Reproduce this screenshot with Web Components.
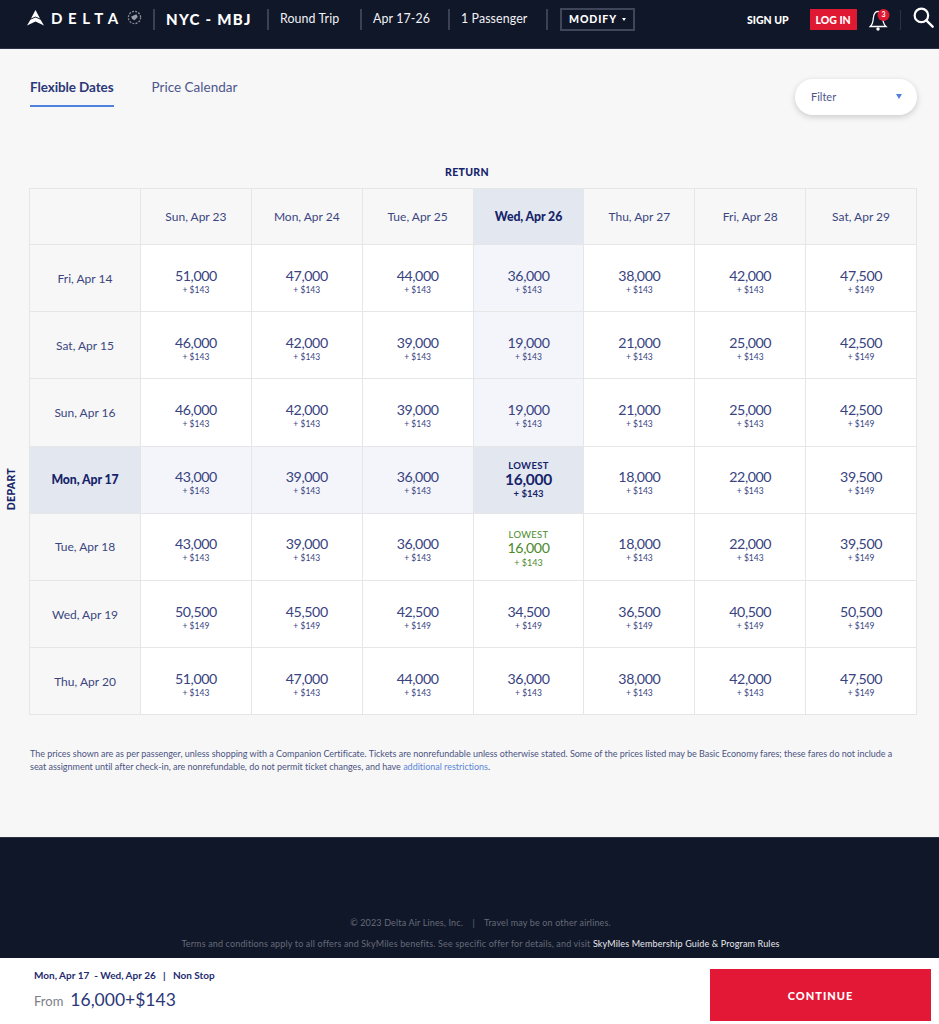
<!DOCTYPE html>
<html lang="en">
<head>
<meta charset="utf-8">
<title>Flexible Dates</title>
<style>
  html, body { margin: 0; padding: 0; background: #f7f7f7; }
  body { font-family: Lato, "Open Sans", sans-serif; color: #2f3b7c; }
</style>
</head>
<body>
<delta-header></delta-header>
<main-panel>
  <tab-bar></tab-bar>
  <fare-grid></fare-grid>
  <fine-print>The prices shown are as per passenger, unless shopping with a Companion Certificate. Tickets are nonrefundable unless otherwise stated. Some of the prices listed may be Basic Economy fares; these fares do not include a<br>seat assignment until after check-in, are nonrefundable, do not permit ticket changes, and have <a href="#" style="color:#5b86d6;text-decoration:none">additional restrictions</a>.</fine-print>
</main-panel>
<page-footer></page-footer>
<summary-bar></summary-bar>

<script>
class DeltaHeader extends HTMLElement {
  constructor() {
    super();
    this.attachShadow({mode:'open'});
    this.shadowRoot.innerHTML = `
<style>
  :host { display:flex; align-items:center; height:49px; box-sizing:border-box; padding:0 5px 0 27px; background:#101729; color:#fff; border-bottom:1px solid #2a3144; font-family:Lato,sans-serif; }
  .logo { display:flex; align-items:center; gap:7px; width:126px; flex:none; margin-top:-13px; }
  .word { font-size:15px; font-weight:700; letter-spacing:5.6px; line-height:20px; margin-right:-2px; }
  .item { flex:none; box-sizing:border-box; white-space:nowrap; font-size:12.4px; line-height:24px; padding:0 0 0 11px; letter-spacing:.1px; color:#f1f2f5; margin-top:-10px; }
  .sep { flex:none; width:2px; height:21px; background:#3a4154; margin-top:-10px; }
  .route { font-size:15px; font-weight:900; letter-spacing:1.3px; color:#fff; padding-left:11px; width:112px; }
  .modify { flex:none; margin-left:12px; margin-top:-10px; width:75px; height:23px; box-sizing:border-box; border:2px solid #3f4659; display:flex; align-items:center; justify-content:center; gap:5px; font-size:10.5px; font-weight:900; letter-spacing:.9px; }
  .caret { width:0; height:0; border:2px solid transparent; border-top:3px solid #fff; border-bottom:0; }
  .signup { flex:none; margin-left:112px; margin-top:-9px; font-size:10.5px; font-weight:900; }
  .login { flex:none; margin-left:21px; margin-top:-9px; width:47px; height:21px; background:#e01933; display:flex; align-items:center; justify-content:center; font-size:10.5px; font-weight:900; }
  .bell { flex:none; margin-left:12px; margin-top:-9px; width:22px; height:24px; display:block; }
  .line { flex:none; margin-left:9px; margin-top:-9px; width:1px; height:20px; background:#2a3144; }
  .search { flex:none; margin-left:12px; margin-top:-13px; width:21px; height:21px; display:block; }
</style>
<div class="logo">
  <svg width="17" height="16" viewBox="0 0 17 16"><path fill="#fff" d="M8.5 0 13 8.6 8.5 6.6 4 8.6Z"/><path fill="#fff" d="M3.4 9.8 8.5 7.6 13.6 9.8 17 15.6 8.5 11.5 0 15.6Z"/></svg>
  <span class="word">DELTA</span>
  <svg width="15" height="15" viewBox="0 0 16 16" style="flex:none;margin-left:-2px"><circle cx="8" cy="8" r="6.5" fill="none" stroke="#8b8f99" stroke-width="1.4" stroke-dasharray="2 1.4"/><path fill="#9a9ea8" d="M4.5 7 10 4.5 11.5 7.5 8 11 5.5 9.5Z"/></svg>
</div>
<div class="sep"></div>
<div class="item route">NYC - MBJ</div>
<div class="sep"></div>
<div class="item" style="width:91px">Round Trip</div>
<div class="sep"></div>
<div class="item" style="width:86px">Apr 17-26</div>
<div class="sep"></div>
<div class="item" style="width:96px">1 Passenger</div>
<div class="sep"></div>
<div class="modify">MODIFY <span class="caret"></span></div>
<div class="signup">SIGN UP</div>
<div class="login">LOG IN</div>
<svg class="bell" viewBox="0 0 22 24"><path fill="none" stroke="#fff" stroke-width="1.3" d="M1.2 18.5C3.6 16.5 4 14 4.3 10.5 4.6 6.5 6 3.6 9 3.4 12 3.6 13.4 6.5 13.7 10.5 14 14 14.8 16.5 17 18.5Z"/><circle cx="9" cy="21" r="1.7" fill="#fff"/><circle cx="14.5" cy="7" r="6" fill="#e01933"/><text x="14.5" y="9.4" font-size="7" font-family="Lato,sans-serif" font-weight="700" fill="#fff" text-anchor="middle">3</text></svg>
<div class="line"></div>
<svg class="search" viewBox="0 0 23 23"><circle cx="9.2" cy="9.2" r="7.4" fill="none" stroke="#fff" stroke-width="2.4"/><path stroke="#fff" stroke-width="2.6" stroke-linecap="round" d="M14.6 14.6 21.5 21.5"/></svg>`;
  }
}

class MainPanel extends HTMLElement {
  constructor() {
    super();
    this.attachShadow({mode:'open'});
    this.shadowRoot.innerHTML = `
<style>
  :host { display:block; height:788px; box-sizing:border-box; background:#f7f7f7; overflow:hidden; }
</style>
<slot></slot>`;
  }
}

class TabBar extends HTMLElement {
  constructor() {
    super();
    this.attachShadow({mode:'open'});
    this.shadowRoot.innerHTML = `
<style>
  :host { display:flex; align-items:flex-start; justify-content:space-between; padding:30px 22px 0 30px; height:117px; box-sizing:border-box; font-family:Lato,sans-serif; }
  .tabs { display:flex; gap:38px; font-size:13.5px; line-height:16px; }
  .tab { height:26px; color:#4d568c; }
  .on { color:#2b3778; font-weight:700; letter-spacing:-.1px; border-bottom:2px solid #4f82dd; }
  .filter { width:122px; height:36px; box-sizing:border-box; background:#fff; border-radius:18px; box-shadow:0 2px 6px rgba(0,0,0,.18); display:flex; align-items:center; justify-content:space-between; padding:0 15px 2px 16px; font-size:11px; color:#4d568c; }
  .arrow { width:0; height:0; border:3.5px solid transparent; border-top:5px solid #4f82dd; border-bottom:0; }
</style>
<div class="tabs"><div class="tab on">Flexible Dates</div><div class="tab">Price Calendar</div></div>
<div class="filter">Filter <span class="arrow"></span></div>`;
  }
}

class FareCell extends HTMLElement {
  static get observedAttributes() {
    return ['points', 'tax', 'label', 'tone'];
  }
  constructor() {
    super();
    this.attachShadow({mode:'open'});
    this.shadowRoot.innerHTML = `
<style>
  :host { display:flex; flex-direction:column; align-items:center; justify-content:center; background:#fff; color:#38437f; border-right:1px solid #e6e6e6; border-bottom:1px solid #e6e6e6; box-sizing:border-box; font-family:Lato,sans-serif; }
  :host(:not([label])) { padding-top:7px; }
  :host([tone="band"]) { background:#f3f5fa; }
  :host([tone="pick"]) { background:#e3e7f0; color:#16246a; font-weight:700; }
  :host([tone="low"]) { color:#4c8a2b; padding-top:4px; }
  .label { display:none; font-size:9.5px; line-height:11px; letter-spacing:.3px; }
  .on { display:block; }
  .points { font-size:14.2px; line-height:16px; letter-spacing:-.4px; }
  :host([tone="pick"]) .points { font-size:15.5px; letter-spacing:-.3px; }
  .tax { font-size:8.5px; line-height:11px; margin-top:1px; }
  :host([tone="pick"]) .tax { font-size:9.5px; line-height:12px; }
  :host([tone="low"]) .tax { font-size:9px; margin-top:1px; }
</style>
<div class="label"></div><div class="points"></div><div class="tax"></div>`;
  }
  attributeChangedCallback(name, oldValue, newValue) {
    if(name === 'points') this.shadowRoot.querySelector('.points').innerText = newValue;
    if(name === 'tax') this.shadowRoot.querySelector('.tax').innerText = '+ $' + newValue;
    if(name === 'label') {
      const l = this.shadowRoot.querySelector('.label');
      l.innerText = newValue;
      l.classList.add('on');
    }
  }
}

class DateCell extends HTMLElement {
  constructor() {
    super();
    this.attachShadow({mode:'open'});
    this.shadowRoot.innerHTML = `
<style>
  :host { display:flex; align-items:center; justify-content:center; background:#f7f7f7; color:#3b4681; font-size:12px; border-right:1px solid #e6e6e6; border-bottom:1px solid #e6e6e6; box-sizing:border-box; font-family:Lato,sans-serif; }
  :host([pick]) { background:#e3e7f0; color:#16246a; font-weight:900; font-size:12.3px; letter-spacing:-.1px; }
</style>
<slot></slot>`;
  }
}

const RETURNS = ['Sun, Apr 23','Mon, Apr 24','Tue, Apr 25','Wed, Apr 26','Thu, Apr 27','Fri, Apr 28','Sat, Apr 29'];
const DEPARTS = [
  ['Fri, Apr 14', [51000,47000,44000,36000,38000,42000,47500], [143,143,143,143,143,143,149]],
  ['Sat, Apr 15', [46000,42000,39000,19000,21000,25000,42500], [143,143,143,143,143,143,149]],
  ['Sun, Apr 16', [46000,42000,39000,19000,21000,25000,42500], [143,143,143,143,143,143,149]],
  ['Mon, Apr 17', [43000,39000,36000,16000,18000,22000,39500], [143,143,143,143,143,143,149]],
  ['Tue, Apr 18', [43000,39000,36000,16000,18000,22000,39500], [143,143,143,143,143,143,149]],
  ['Wed, Apr 19', [50500,45500,42500,34500,36500,40500,50500], [149,149,149,149,149,149,149]],
  ['Thu, Apr 20', [51000,47000,44000,36000,38000,42000,47500], [143,143,143,143,143,143,149]]
];
const PICK_ROW = 3, PICK_COL = 3;

class FareGrid extends HTMLElement {
  constructor() {
    super();
    this.attachShadow({mode:'open'});
    this.shadowRoot.innerHTML = `
<style>
  :host { display:grid; grid-template-columns:29px 888px; grid-template-rows:22px auto; font-family:Lato,sans-serif; }
  .ret { grid-column:2; text-align:center; font-size:10.5px; font-weight:900; line-height:12px; color:#16246a; letter-spacing:.3px; padding-right:12px; }
  .dep { grid-column:1; display:flex; align-items:center; justify-content:center; padding:75px 8px 0 0; box-sizing:border-box; }
  .dep span { writing-mode:vertical-rl; transform:rotate(180deg); font-size:10.5px; font-weight:900; color:#16246a; letter-spacing:.3px; }
  .table { grid-column:2; display:grid; grid-template-columns:111px repeat(7, 1fr); grid-template-rows:56px repeat(7, 67.2px); border-top:1px solid #e6e6e6; border-left:1px solid #e6e6e6; }
</style>
<div class="ret" style="grid-row:1">RETURN</div>
<div class="dep" style="grid-row:2"><span>DEPART</span></div>
<div class="table" style="grid-row:2"></div>`;
    const table = this.shadowRoot.querySelector('.table');
    table.appendChild(document.createElement('date-cell'));
    RETURNS.forEach((r, c) => {
      const d = document.createElement('date-cell');
      d.textContent = r;
      if(c === PICK_COL) d.setAttribute('pick', '');
      table.appendChild(d);
    });
    DEPARTS.forEach(([day, pts, tax], r) => {
      const d = document.createElement('date-cell');
      d.textContent = day;
      if(r === PICK_ROW) d.setAttribute('pick', '');
      table.appendChild(d);
      pts.forEach((p, c) => {
        const f = document.createElement('fare-cell');
        f.setAttribute('points', p.toLocaleString('en-US'));
        f.setAttribute('tax', tax[c]);
        if(r === PICK_ROW && c === PICK_COL) { f.setAttribute('tone', 'pick'); f.setAttribute('label', 'LOWEST'); }
        else if(r === PICK_ROW + 1 && c === PICK_COL) { f.setAttribute('tone', 'low'); f.setAttribute('label', 'LOWEST'); }
        else if((r === PICK_ROW && c < PICK_COL) || (c === PICK_COL && r < PICK_ROW)) f.setAttribute('tone', 'band');
        table.appendChild(f);
      });
    });
  }
}

class FinePrint extends HTMLElement {
  constructor() {
    super();
    this.attachShadow({mode:'open'});
    this.shadowRoot.innerHTML = `
<style>
  :host { display:block; margin:32px 0 0 30px; width:890px; font-family:Lato,sans-serif; font-size:9px; letter-spacing:-.018px; line-height:13px; color:#4b5482; white-space:nowrap; }
</style>
<slot></slot>`;
  }
}

class PageFooter extends HTMLElement {
  constructor() {
    super();
    this.attachShadow({mode:'open'});
    this.shadowRoot.innerHTML = `
<style>
  :host { display:flex; flex-direction:column; align-items:center; justify-content:flex-end; gap:8px; height:121px; box-sizing:border-box; padding:0 0 8px 22px; background:#101729; color:#666b78; font-family:Lato,sans-serif; font-size:9px; line-height:13px; letter-spacing:.15px; border-top:1px solid #2a3144; }
  b { font-weight:400; color:#e8e9ec; }
  i { font-style:normal; padding:0 7px; }
</style>
<div>© 2023 Delta Air Lines, Inc. <i>|</i> Travel may be on other airlines.</div>
<div>Terms and conditions apply to all offers and SkyMiles benefits. See specific offer for details, and visit <b>SkyMiles Membership Guide &amp; Program Rules</b></div>`;
  }
}

class SummaryBar extends HTMLElement {
  constructor() {
    super();
    this.attachShadow({mode:'open'});
    this.shadowRoot.innerHTML = `
<style>
  :host { display:flex; justify-content:space-between; align-items:flex-start; height:66px; box-sizing:border-box; padding:11px 8px 0 34px; background:#fff; font-family:Lato,sans-serif; }
  .trip { font-size:10px; font-weight:700; line-height:13px; color:#1f2c70; white-space:pre; }
  .price { display:flex; align-items:baseline; gap:7px; margin-top:5px; font-size:17.5px; line-height:26px; color:#2b3778; }
  .from { font-size:13px; color:#7c7f88; }
  .go { width:221px; height:52px; background:#e31837; color:#fff; display:flex; align-items:center; justify-content:center; font-size:11px; font-weight:900; letter-spacing:1px; }
</style>
<div><div class="trip">Mon, Apr 17  - Wed, Apr 26   |   Non Stop</div><div class="price"><span class="from">From</span><span>16,000+$143</span></div></div>
<div class="go">CONTINUE</div>`;
  }
}

window.customElements.define('delta-header', DeltaHeader);
window.customElements.define('main-panel', MainPanel);
window.customElements.define('tab-bar', TabBar);
window.customElements.define('fare-cell', FareCell);
window.customElements.define('date-cell', DateCell);
window.customElements.define('fare-grid', FareGrid);
window.customElements.define('fine-print', FinePrint);
window.customElements.define('page-footer', PageFooter);
window.customElements.define('summary-bar', SummaryBar);
</script>
</body>
</html>
